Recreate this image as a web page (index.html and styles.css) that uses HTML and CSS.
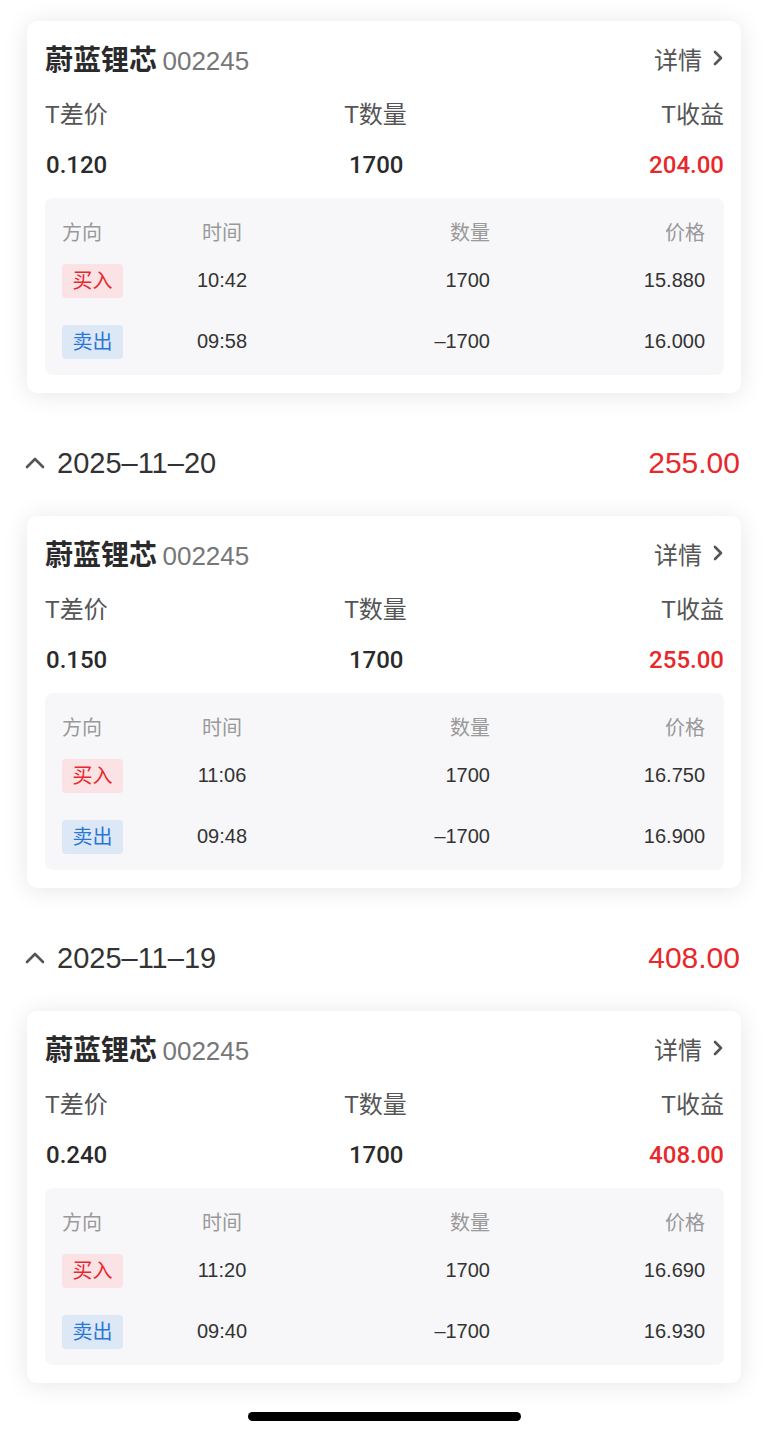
FILE: index.html
```html
<!DOCTYPE html>
<html lang="zh-CN">

<head>
    <meta charset="UTF-8" />
    <meta name="viewport" content="width=device-width, initial-scale=1.0" />
    <title>做T记录</title>
    <link rel="stylesheet" href="styles.css">
</head>

<body>

    <div class="list">
        <div class="card">
            <div class="card__head">
                <div class="card__stock">
                    <span class="card__name">蔚蓝锂芯</span>
                    <span class="card__code">002245</span>
                </div>
                <div class="card__more">
                    详情
                    <svg class="card__arrow" viewBox="0 0 12 16" width="12" height="16">
                        <path d="M3 2 L9 8 L3 14" fill="none" stroke="#555" stroke-width="2.6" stroke-linecap="round" stroke-linejoin="round" />
                    </svg>
                </div>
            </div>
            <div class="card__row card__labels">
                <span>T差价</span>
                <span>T数量</span>
                <span>T收益</span>
            </div>
            <div class="card__row card__values">
                <span>0.120</span>
                <span>1700</span>
                <span class="is-red">204.00</span>
            </div>
            <div class="trades">
                <div class="trades__row trades__head">
                    <span>方向</span>
                    <span class="trades__time">时间</span>
                    <span class="trades__num">数量</span>
                    <span class="trades__num">价格</span>
                </div>
                <div class="trades__row">
                    <span><i class="tag tag--buy">买入</i></span>
                    <span class="trades__time">10:42</span>
                    <span class="trades__num">1700</span>
                    <span class="trades__num">15.880</span>
                </div>
                <div class="trades__row">
                    <span><i class="tag tag--sell">卖出</i></span>
                    <span class="trades__time">09:58</span>
                    <span class="trades__num">–1700</span>
                    <span class="trades__num">16.000</span>
                </div>
            </div>
        </div>

        <div class="day">
            <div class="day__date">
                <svg class="day__toggle" viewBox="0 0 20 12" width="20" height="12">
                    <path d="M2 10 L10 2 L18 10" fill="none" stroke="#555" stroke-width="2.6" stroke-linecap="round" stroke-linejoin="round" />
                </svg>
                2025–11–20
            </div>
            <div class="day__sum is-red">255.00</div>
        </div>

        <div class="card">
            <div class="card__head">
                <div class="card__stock">
                    <span class="card__name">蔚蓝锂芯</span>
                    <span class="card__code">002245</span>
                </div>
                <div class="card__more">
                    详情
                    <svg class="card__arrow" viewBox="0 0 12 16" width="12" height="16">
                        <path d="M3 2 L9 8 L3 14" fill="none" stroke="#555" stroke-width="2.6" stroke-linecap="round" stroke-linejoin="round" />
                    </svg>
                </div>
            </div>
            <div class="card__row card__labels">
                <span>T差价</span>
                <span>T数量</span>
                <span>T收益</span>
            </div>
            <div class="card__row card__values">
                <span>0.150</span>
                <span>1700</span>
                <span class="is-red">255.00</span>
            </div>
            <div class="trades">
                <div class="trades__row trades__head">
                    <span>方向</span>
                    <span class="trades__time">时间</span>
                    <span class="trades__num">数量</span>
                    <span class="trades__num">价格</span>
                </div>
                <div class="trades__row">
                    <span><i class="tag tag--buy">买入</i></span>
                    <span class="trades__time">11:06</span>
                    <span class="trades__num">1700</span>
                    <span class="trades__num">16.750</span>
                </div>
                <div class="trades__row">
                    <span><i class="tag tag--sell">卖出</i></span>
                    <span class="trades__time">09:48</span>
                    <span class="trades__num">–1700</span>
                    <span class="trades__num">16.900</span>
                </div>
            </div>
        </div>

        <div class="day">
            <div class="day__date">
                <svg class="day__toggle" viewBox="0 0 20 12" width="20" height="12">
                    <path d="M2 10 L10 2 L18 10" fill="none" stroke="#555" stroke-width="2.6" stroke-linecap="round" stroke-linejoin="round" />
                </svg>
                2025–11–19
            </div>
            <div class="day__sum is-red">408.00</div>
        </div>

        <div class="card">
            <div class="card__head">
                <div class="card__stock">
                    <span class="card__name">蔚蓝锂芯</span>
                    <span class="card__code">002245</span>
                </div>
                <div class="card__more">
                    详情
                    <svg class="card__arrow" viewBox="0 0 12 16" width="12" height="16">
                        <path d="M3 2 L9 8 L3 14" fill="none" stroke="#555" stroke-width="2.6" stroke-linecap="round" stroke-linejoin="round" />
                    </svg>
                </div>
            </div>
            <div class="card__row card__labels">
                <span>T差价</span>
                <span>T数量</span>
                <span>T收益</span>
            </div>
            <div class="card__row card__values">
                <span>0.240</span>
                <span>1700</span>
                <span class="is-red">408.00</span>
            </div>
            <div class="trades">
                <div class="trades__row trades__head">
                    <span>方向</span>
                    <span class="trades__time">时间</span>
                    <span class="trades__num">数量</span>
                    <span class="trades__num">价格</span>
                </div>
                <div class="trades__row">
                    <span><i class="tag tag--buy">买入</i></span>
                    <span class="trades__time">11:20</span>
                    <span class="trades__num">1700</span>
                    <span class="trades__num">16.690</span>
                </div>
                <div class="trades__row">
                    <span><i class="tag tag--sell">卖出</i></span>
                    <span class="trades__time">09:40</span>
                    <span class="trades__num">–1700</span>
                    <span class="trades__num">16.930</span>
                </div>
            </div>
        </div>
    </div>

    <div class="home-bar"></div>

</body>

</html>
```

FILE: styles.css
```css
body {
    margin: 0;
    background: #fff;
    font-family: "Liberation Sans", "Noto Sans CJK SC", sans-serif;
    color: #222;
    height: 1435px;
    overflow: hidden;
}

.list {
    padding: 21px 27px 0 27px;
}

/* карточка сделки */
.card {
    background: #fff;
    border-radius: 10px;
    padding: 19px 17px 18px 18px;
    box-shadow: 0 2px 24px rgba(0, 0, 0, 0.1);
}

.card__head {
    display: flex;
    justify-content: space-between;
    align-items: center;
    height: 36px;
}

.card__name {
    font-size: 28px;
    font-weight: bold;
    color: #2a2a2a;
}

.card__code {
    font-size: 26px;
    color: #777;
    margin-left: 1px;
}

.card__more {
    display: flex;
    align-items: center;
    font-size: 24px;
    color: #555;
}

.card__arrow {
    margin-left: 10px;
}

.card__row {
    display: flex;
    justify-content: space-between;
    align-items: center;
    height: 34px;
}

.card__labels {
    margin-top: 19px;
    font-size: 24px;
    color: #555;
}

.card__labels span:nth-child(2) {
    margin-right: 18px;
}

.card__values {
    margin-top: 19px;
    font-family: Roboto, "Liberation Sans", sans-serif;
    font-size: 24px;
    font-weight: 500;
    color: #2a2a2a;
    padding-left: 1px;
}

.card__values span:nth-child(2) {
    margin-right: 4px;
}

.is-red {
    color: #e8282b;
}

/* таблица сделок */
.trades {
    margin-top: 16px;
    background: #f7f7f9;
    border-radius: 8px;
    padding: 14px 19px 3px 17px;
}

.trades__row {
    display: grid;
    grid-template-columns: 100px 120px 208px 1fr;
    align-items: center;
    height: 61px;
    font-size: 20px;
    color: #333;
}

.trades__head {
    height: 38px;
    color: #999;
}

.trades__time {
    text-align: center;
}

.trades__num {
    text-align: right;
}

.tag {
    display: inline-block;
    font-style: normal;
    width: 61px;
    height: 34px;
    line-height: 34px;
    text-align: center;
    border-radius: 4px;
}

.tag--buy {
    background: #fbe2e5;
    color: #e8282b;
}

.tag--sell {
    background: #dde8f6;
    color: #2a76d6;
}

/* заголовок дня */
.day {
    display: flex;
    justify-content: space-between;
    align-items: center;
    height: 40px;
    margin: 50px 1px 33px 0;
}

.day__date {
    display: flex;
    align-items: center;
    font-size: 29px;
    color: #333;
}

.day__toggle {
    margin: 0 12px 0 -2px;
}

.day__sum {
    font-size: 30px;
}

.home-bar {
    position: fixed;
    left: 248px;
    bottom: 14px;
    width: 273px;
    height: 9px;
    border-radius: 5px;
    background: #000;
}
```
